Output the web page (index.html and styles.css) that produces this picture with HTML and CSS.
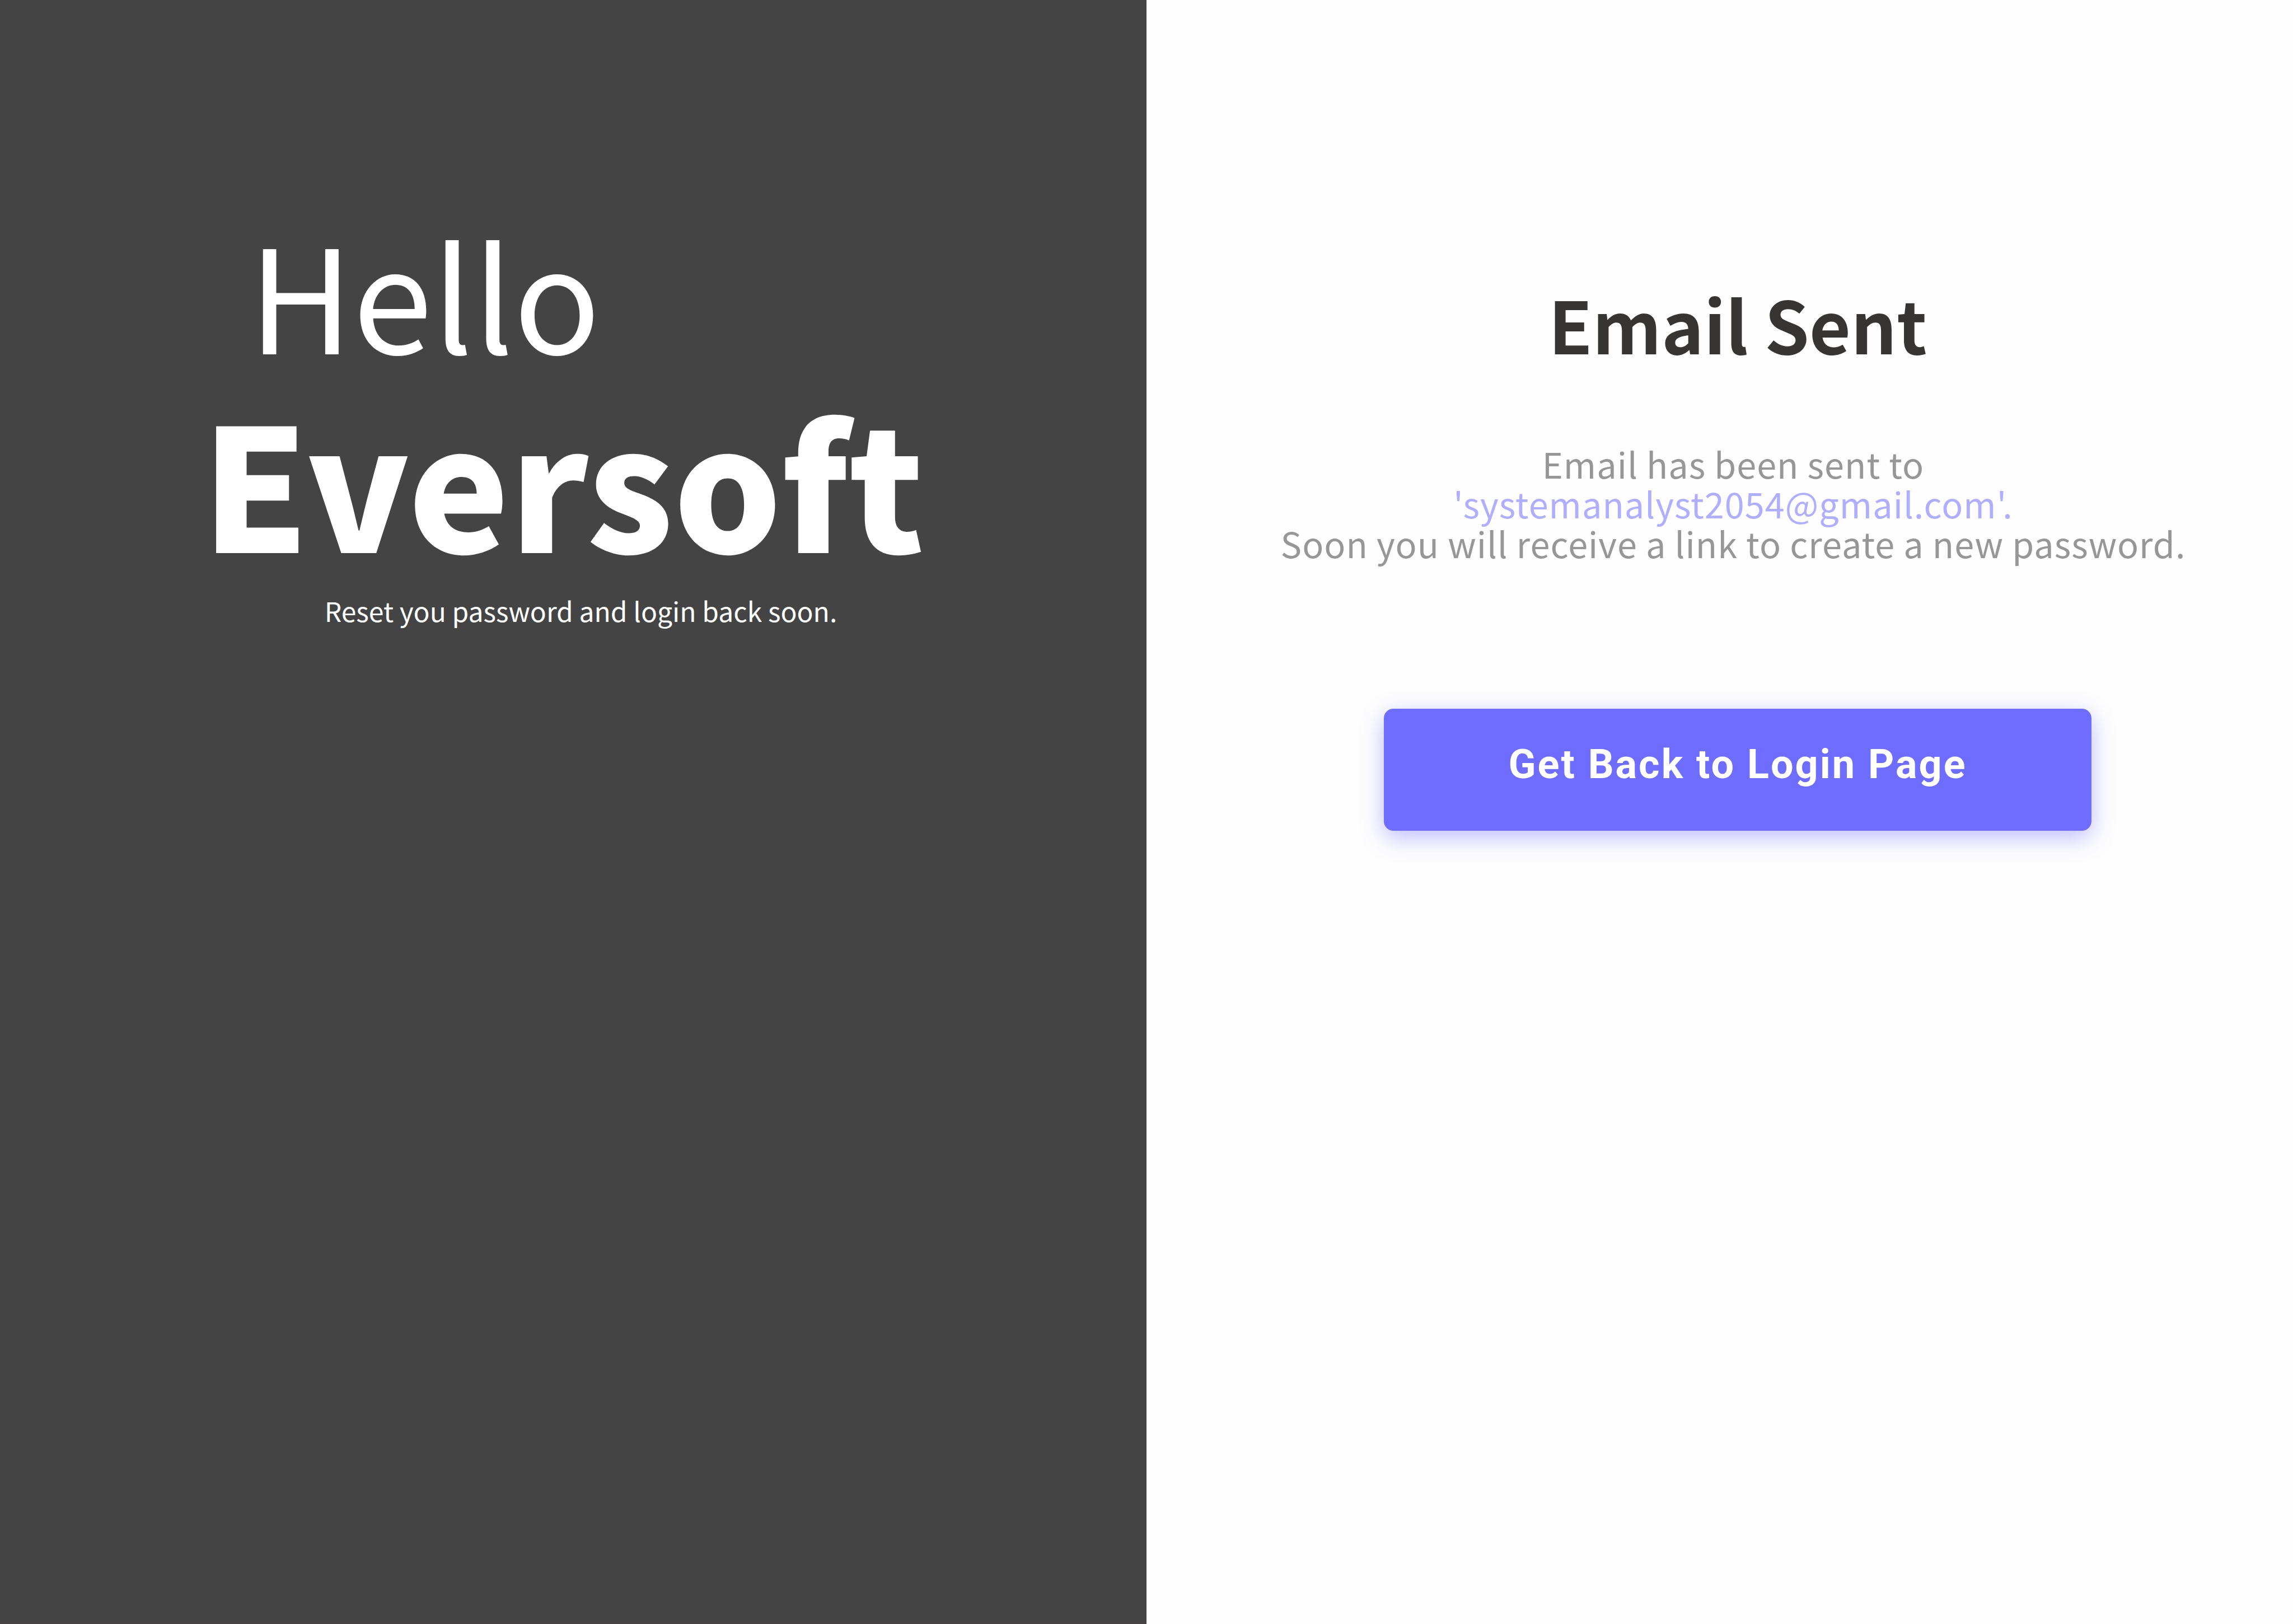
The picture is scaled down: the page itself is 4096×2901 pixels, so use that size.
FILE: index.html
```html
<!DOCTYPE html>
<html lang="en">
<head>
  <meta charset="utf-8">
  <meta name="viewport" content="width=device-width, initial-scale=1">
  <title>Email Sent</title>
  <link rel="stylesheet" href="styles.css">
</head>
<body>
  <div class="page">
    <aside class="welcome">
      <div class="brand">
        <p class="greeting">Hello</p>
        <p class="name">Eversoft</p>
        <p class="tagline">Reset you password and login back soon.</p>
      </div>
    </aside>
    <main class="content">
      <h1 class="title">Email Sent</h1>
      <p class="message">Email has been sent to<br>
        <a class="address" href="mailto:systemanalyst2054@gmail.com">'systemanalyst2054@gmail.com'.</a><br>
        Soon you will receive a link to create a new password.</p>
      <button class="back" type="button">Get Back to Login Page</button>
    </main>
  </div>
</body>
</html>
```

FILE: styles.css
```css
* {
  box-sizing: border-box;
}

body {
  margin: 0;
  background: #fefefe;
  font-family: "Noto Sans CJK SC", "Noto Sans", sans-serif;
}

p,
h1 {
  margin: 0;
}

.page {
  display: grid;
  grid-template-columns: 1fr 1fr;
  min-height: 100vh;
}

.welcome {
  display: flex;
  align-items: flex-start;
  padding: 370px 0 0 360px;
  background: #444;
  border-bottom: 2px solid #4a4346;
  color: #fff;
}

.brand {
  display: flex;
  flex-direction: column;
}

.greeting {
  padding-left: 84px;
  font-size: 256px;
  line-height: 304px;
}

.name {
  font-size: 304px;
  font-weight: 900;
  line-height: 364px;
}

.tagline {
  padding-left: 64px;
  text-align: center;
  font-size: 48px;
  line-height: 104px;
}

.content {
  display: flex;
  flex-direction: column;
  align-items: center;
  padding: 478px 0 0 64px;
}

.title {
  color: #373534;
  font-size: 128px;
  font-weight: 700;
  line-height: 200px;
}

.message {
  margin-top: 114px;
  padding-right: 16px;
  color: #979797;
  font-size: 63px;
  letter-spacing: 1px;
  line-height: 71px;
  text-align: center;
}

.address {
  color: #b0aeff;
  text-decoration: none;
}

.back {
  width: 1264px;
  height: 218px;
  margin-top: 261px;
  padding: 0 0 20px;
  border: 0;
  border-radius: 17px;
  background: #6f6dff;
  box-shadow: 0 12px 40px rgba(111, 109, 255, 0.45);
  color: #fff;
  font-family: Roboto, sans-serif;
  font-size: 72px;
  font-weight: 700;
  letter-spacing: 3px;
  cursor: pointer;
}
```
